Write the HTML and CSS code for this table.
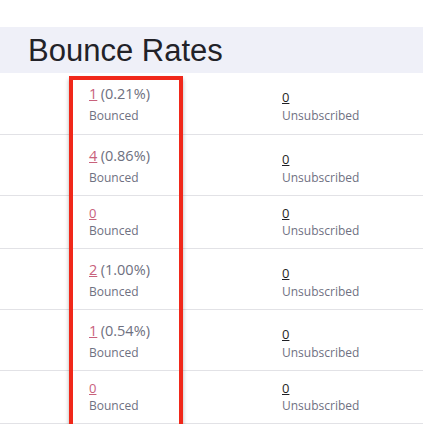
FILE: index.html
```html
<!DOCTYPE html>
<html>
<head>
<meta charset="utf-8">
<link rel="stylesheet" href="styles.css">
</head>
<body>
<div class="page">
  <div class="header"><h2 class="title">Bounce Rates</h2></div>
  <div class="table">
    <div class="row">
      <div class="cell"><div class="num big"><a class="link">1</a> <span class="pct">(0.21%)</span></div><div class="label">Bounced</div></div>
      <div class="cell"><div class="num big"><a class="zero">0</a></div><div class="label">Unsubscribed</div></div>
    </div>
    <div class="row">
      <div class="cell"><div class="num big"><a class="link">4</a> <span class="pct">(0.86%)</span></div><div class="label">Bounced</div></div>
      <div class="cell"><div class="num big"><a class="zero">0</a></div><div class="label">Unsubscribed</div></div>
    </div>
    <div class="row short">
      <div class="cell"><div class="num"><a class="link small">0</a></div><div class="label">Bounced</div></div>
      <div class="cell"><div class="num"><a class="zero">0</a></div><div class="label">Unsubscribed</div></div>
    </div>
    <div class="row">
      <div class="cell"><div class="num big"><a class="link">2</a> <span class="pct">(1.00%)</span></div><div class="label">Bounced</div></div>
      <div class="cell"><div class="num big"><a class="zero">0</a></div><div class="label">Unsubscribed</div></div>
    </div>
    <div class="row">
      <div class="cell"><div class="num big"><a class="link">1</a> <span class="pct">(0.54%)</span></div><div class="label">Bounced</div></div>
      <div class="cell"><div class="num big"><a class="zero">0</a></div><div class="label">Unsubscribed</div></div>
    </div>
    <div class="row short">
      <div class="cell"><div class="num"><a class="link small">0</a></div><div class="label">Bounced</div></div>
      <div class="cell"><div class="num"><a class="zero">0</a></div><div class="label">Unsubscribed</div></div>
    </div>
    <div class="highlight"></div>
  </div>
</div>
</body>
</html>
```
FILE: styles.css
```css
html, body {
  margin: 0;
  padding: 0;
  background: #ffffff;
}
.page {
  width: 423px;
  padding-top: 27px;
  font-family: "Open Sans", "Noto Sans", sans-serif;
}
.header {
  background: #eff0f8;
  height: 46px;
  display: flex;
  align-items: center;
  padding-left: 28px;
}
.title {
  margin: 0;
  font-family: "Liberation Sans", Arial, sans-serif;
  font-weight: 400;
  font-size: 31px;
  color: #222228;
  line-height: 1;
}
.table {
  position: relative;
}
.row {
  display: grid;
  grid-template-columns: 193px 1fr;
  padding: 9px 0 8px 89px;
  border-bottom: 1px solid #e2e2e6;
}
.row:first-child {
  padding-bottom: 9px;
}
.cell {
  display: flex;
  flex-direction: column;
}
.num {
  height: 16px;
  line-height: 16px;
  font-size: 13px;
  white-space: nowrap;
}
.num.big {
  height: 24px;
  line-height: 24px;
}
.link {
  color: #c8617c;
  text-decoration: underline;
  font-size: 14.5px;
}
.link.small {
  font-size: 13px;
}
.pct {
  color: #6e7080;
  font-size: 14.5px;
}
.zero {
  color: #1f1f24;
  text-decoration: underline;
  font-size: 13px;
  position: relative;
  top: 3px;
}
.short .zero {
  top: 0;
}
.label {
  font-size: 12px;
  line-height: 19px;
  color: #6f7182;
}
.highlight {
  position: absolute;
  left: 69px;
  top: 3px;
  width: 106px;
  height: 345px;
  border: 4px solid #f0281a;
  box-shadow: 0 3px 4px rgba(0, 0, 0, 0.3);
  pointer-events: none;
}
```
